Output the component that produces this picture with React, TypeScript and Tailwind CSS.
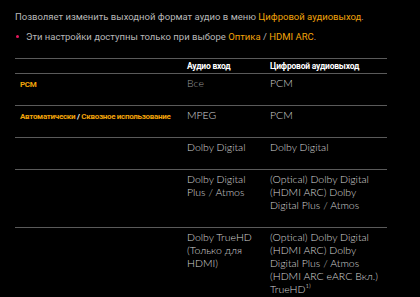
import React from "react";

type Row = {
  mode?: React.ReactNode;
  input: React.ReactNode;
  output: React.ReactNode;
  muted?: boolean;
};

const rows: Row[] = [
  {
    mode: <span className="text-[#f0a30a]">PCM</span>,
    input: "Все",
    output: "PCM",
    muted: true,
  },
  {
    mode: (
      <>
        <span className="text-[#f0a30a]">Автоматически</span>
        <span className="text-white"> / </span>
        <span className="text-[#f0a30a]">Сквозное использование</span>
      </>
    ),
    input: "MPEG",
    output: "PCM",
  },
  { input: "Dolby Digital", output: "Dolby Digital" },
  {
    input: "Dolby Digital Plus / Atmos",
    output: "(Optical) Dolby Digital (HDMI ARC) Dolby Digital Plus / Atmos",
  },
  {
    input: "Dolby TrueHD (Только для HDMI)",
    output: "(Optical) Dolby Digital (HDMI ARC) Dolby Digital Plus / Atmos (HDMI ARC eARC Вкл.) TrueHD¹⁾",
  },
];

export default function App() {
  return (
    <div className="w-[420px] h-[297px] overflow-hidden bg-black pl-[15px] pt-[11px] font-['Roboto',sans-serif]">
      <p className="text-[9.5px] leading-[11px] text-[#b8b8b8]">
        Позволяет изменить выходной формат аудио в меню{" "}
        <span className="text-[#f0a30a]">Цифровой аудиовыход</span>.
      </p>
      <div className="mt-[9px] flex items-center gap-[7px] text-[9.5px] leading-[11px] text-[#b8b8b8]">
        <span className="ml-[1px] size-[3px] rounded-full bg-[#e6175c]" />
        <span>
          Эти настройки доступны только при выборе{" "}
          <span className="text-[#f0a30a]">Оптика</span> /{" "}
          <span className="text-[#f0a30a]">HDMI ARC</span>.
        </span>
      </div>

      {/* audio format table */}
      <table className="mt-[16px] w-[372px] table-fixed border-collapse">
        <colgroup>
          <col className="w-[167px]" />
          <col className="w-[83px]" />
          <col className="w-[122px]" />
        </colgroup>
        <thead>
          <tr className="h-[15px] border-y border-[#5a5a5a] text-left text-[8.5px] font-bold text-white tracking-[-0.2px]">
            <th />
            <th className="pl-[5px] font-bold">Аудио вход</th>
            <th className="pl-[5px] font-bold">Цифровой аудиовыход</th>
          </tr>
        </thead>
        <tbody>
          {rows.map((row, i) => (
            <tr
              key={i}
              className={i < rows.length - 1 ? "border-b border-[#5a5a5a]" : ""}
            >
              <td className="align-top pl-[5px] pt-[5px] text-[8px] leading-[11px] font-bold tracking-[-0.3px]">
                {row.mode}
              </td>
              <td
                className={
                  row.muted
                    ? "align-top pl-[5px] pr-[4px] pt-[3px] pb-[15px] font-['Lato',sans-serif] font-light text-[10.5px] leading-[13px] text-[#9a9a9a]"
                    : "align-top pl-[5px] pr-[4px] pt-[3px] pb-[15px] font-['Lato',sans-serif] font-light text-[10.5px] leading-[13px] text-[#d6d6d6]"
                }
              >
                {row.input}
              </td>
              <td className="align-top pl-[5px] pr-[2px] pt-[3px] pb-[15px] font-['Lato',sans-serif] font-light text-[10.5px] leading-[13px] text-[#d6d6d6]">
                {row.output}
              </td>
            </tr>
          ))}
        </tbody>
      </table>
    </div>
  );
}
